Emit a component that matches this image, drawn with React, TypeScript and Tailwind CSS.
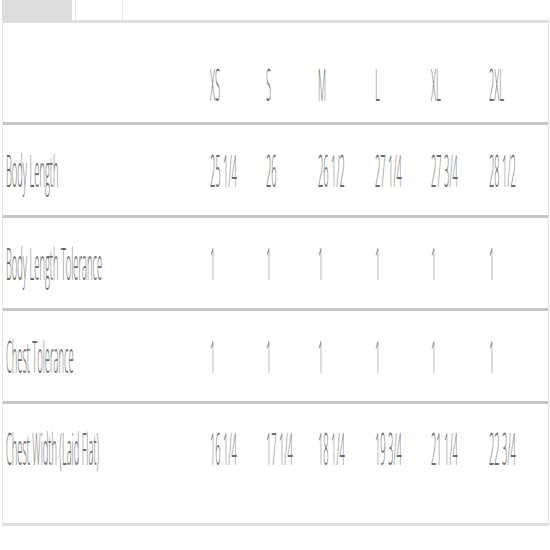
import React from "react";

const sizes = ["XS", "S", "M", "L", "XL", "2XL"];
const rows: { label: string; values: string[]; last?: boolean }[] = [
  { label: "Body Length", values: ["25 1/4", "26", "26 1/2", "27 1/4", "27 3/4", "28 1/2"] },
  { label: "Body Length Tolerance", values: ["1", "1", "1", "1", "1", "1"] },
  { label: "Chest Tolerance", values: ["1", "1", "1", "1", "1", "1"] },
  { label: "Chest Width (Laid Flat)", values: ["16 1/4", "17 1/4", "18 1/4", "19 3/4", "21 1/4", "22 3/4"], last: true },
];

function T({ children }: { children: React.ReactNode }) {
  return (
    <span className="inline-block origin-left scale-x-[0.212] whitespace-nowrap text-[44px] leading-[43px] font-light text-[#6a6a6a] [font-family:'Open_Sans',sans-serif]">
      {children}
    </span>
  );
}

export default function App() {
  return (
    <div className="w-[550px] h-[550px] bg-white overflow-hidden">
      <div className="flex h-[20px] pl-[2px]">
        <div className="w-[70px] bg-[#dddddd]" />
        <div className="ml-[3px] w-[48px] border-x border-[#e6e6e6]" />
      </div>
      <div className="ml-[2px] w-[547px] border-x border-[#e4e4e4] border-t-[3px] border-t-[#dedede] border-b-[3px] border-b-[#dedede]">
        <div className="grid grid-cols-[204px_56px_52px_57px_56px_58px_1fr] h-[102px] pt-[40px] border-b-[3px] border-[#c6c6c6]">
          <div className="pl-[3px]" />
          {sizes.map((s) => (
            <div key={s} className="pl-[3px]">
              <T>{s}</T>
            </div>
          ))}
          <div />
        </div>
        {rows.map((r) => (
          <div
            key={r.label}
            className={
              r.last
                ? "grid grid-cols-[204px_56px_52px_57px_56px_58px_1fr] h-[119px] pt-[23px]"
                : "grid grid-cols-[204px_56px_52px_57px_56px_58px_1fr] h-[93px] pt-[24px] border-b-[3px] border-[#c6c6c6]"
            }
          >
            <div className="pl-[3px]">
              <T>{r.label}</T>
            </div>
            {r.values.map((v, i) => (
              <div key={i} className="pl-[3px]">
                <T>{v}</T>
              </div>
            ))}
            <div />
          </div>
        ))}
      </div>
    </div>
  );
}
